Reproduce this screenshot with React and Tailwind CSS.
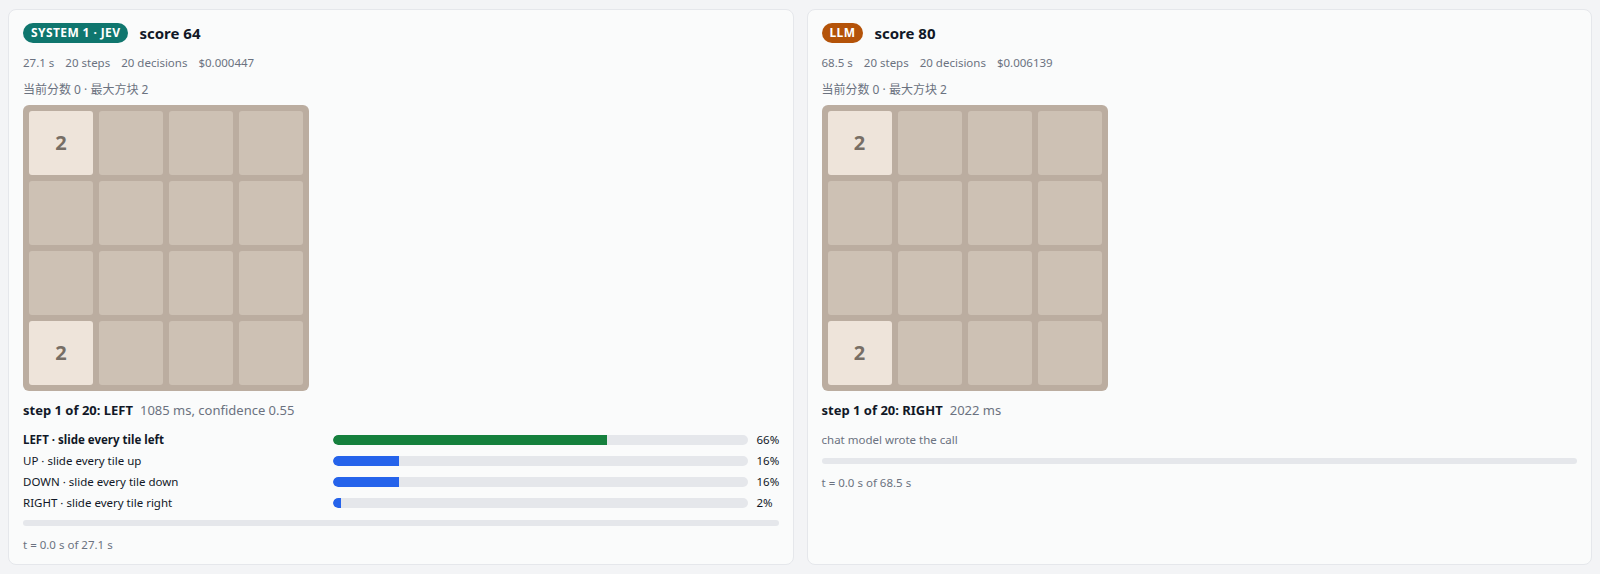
const font = { fontFamily: '"Noto Sans", "Noto Sans CJK SC", sans-serif' };

const Board = ({ cells }) => (
  <div className="grid grid-cols-4 grid-rows-4 gap-[6px] p-[6px] w-[286px] h-[286px] bg-[#bbada0] rounded-[6px] mt-[7px]">
    {cells.map((v, i) => (
      <div
        key={i}
        className={
          v
            ? "rounded-[3px] bg-[#eee4da] flex items-center justify-center text-[20px] font-bold text-[#776e65]"
            : "rounded-[3px] bg-[#cdc1b4]"
        }
      >
        {v || ""}
      </div>
    ))}
  </div>
);

const cells = [2, 0, 0, 0, 0, 0, 0, 0, 0, 0, 0, 0, 2, 0, 0, 0];

const Header = ({ badge, badgeClass, score, metrics }) => (
  <>
    <div className="flex items-center gap-[11px] h-[20px]">
      <span
        className={`px-[8px] h-[20px] flex items-center rounded-full text-[12px] font-bold text-white tracking-[0.4px] ${badgeClass}`}
      >
        {badge}
      </span>
      <span className="text-[15px] font-bold text-[#111827]">{score}</span>
    </div>
    <div className="flex gap-[11px] text-[11.5px] leading-4 text-[#6b7280] mt-[12px]">
      {metrics.map((m) => (
        <span key={m}>{m}</span>
      ))}
    </div>
    <div className="text-[12px] leading-4 text-[#6b7280] mt-[11px]">当前分数 0 · 最大方块 2</div>
    <Board cells={cells} />
  </>
);

const rows = [
  { label: "LEFT · slide every tile left", pct: 66, color: "bg-[#15803d]", bold: true },
  { label: "UP · slide every tile up", pct: 16, color: "bg-[#2563eb]" },
  { label: "DOWN · slide every tile down", pct: 16, color: "bg-[#2563eb]" },
  { label: "RIGHT · slide every tile right", pct: 2, color: "bg-[#2563eb]" },
];

export default function App() {
  return (
    <div className="h-[574px] overflow-hidden bg-[#f3f4f6]" style={font}>
      <div className="px-[8px] pt-[9px] grid grid-cols-2 gap-[13px]">
        <div className="min-w-0 border border-[#e5e7eb] rounded-[8px] bg-[#fafbfb] px-[14px] pt-[13px] pb-[11px] flex flex-col">
          <Header
            badge="SYSTEM 1 · JEV"
            badgeClass="bg-[#0f766e]"
            score="score 64"
            metrics={["27.1 s", "20 steps", "20 decisions", "$0.000447"]}
          />
          <div className="mt-[10px] h-[20px] flex items-center gap-[7px]">
            <span className="text-[13px] font-bold text-[#111827]">step 1 of 20: LEFT</span>
            <span className="text-[13px] text-[#6b7280]">1085 ms, confidence 0.55</span>
          </div>
          <div className="mt-[8px] flex flex-col">
            {rows.map((r) => (
              <div key={r.label} className="grid grid-cols-[301px_1fr_22px] gap-[9px] items-center h-[21px] text-[11.5px] text-[#111827]">
                <span className={r.bold ? "font-bold" : ""}>{r.label}</span>
                <div className="h-[10px] rounded-full bg-[#e5e7eb] overflow-hidden">
                  <div className={`h-full rounded-l-full ${r.color}`} style={{ width: `${r.pct}%` }} />
                </div>
                <span>{r.pct}%</span>
              </div>
            ))}
          </div>
          <div className="mt-[7px] h-[6px] rounded-full bg-[#e5e7eb]" />
          <div className="mt-[11px] text-[11.5px] leading-4 text-[#6b7280]">t = 0.0 s of 27.1 s</div>
        </div>

        <div className="min-w-0 border border-[#e5e7eb] rounded-[8px] bg-[#fafbfb] px-[14px] pt-[13px] pb-[11px] flex flex-col">
          <Header
            badge="LLM"
            badgeClass="bg-[#b45309]"
            score="score 80"
            metrics={["68.5 s", "20 steps", "20 decisions", "$0.006139"]}
          />
          <div className="mt-[10px] h-[20px] flex items-center gap-[7px]">
            <span className="text-[13px] font-bold text-[#111827]">step 1 of 20: RIGHT</span>
            <span className="text-[13px] text-[#6b7280]">2022 ms</span>
          </div>
          <div className="mt-[11px] text-[11.5px] leading-4 text-[#6b7280]">chat model wrote the call</div>
          <div className="mt-[10px] h-[6px] rounded-full bg-[#e5e7eb]" />
          <div className="mt-[11px] text-[11.5px] leading-4 text-[#6b7280]">t = 0.0 s of 68.5 s</div>
        </div>
      </div>
    </div>
  );
}
